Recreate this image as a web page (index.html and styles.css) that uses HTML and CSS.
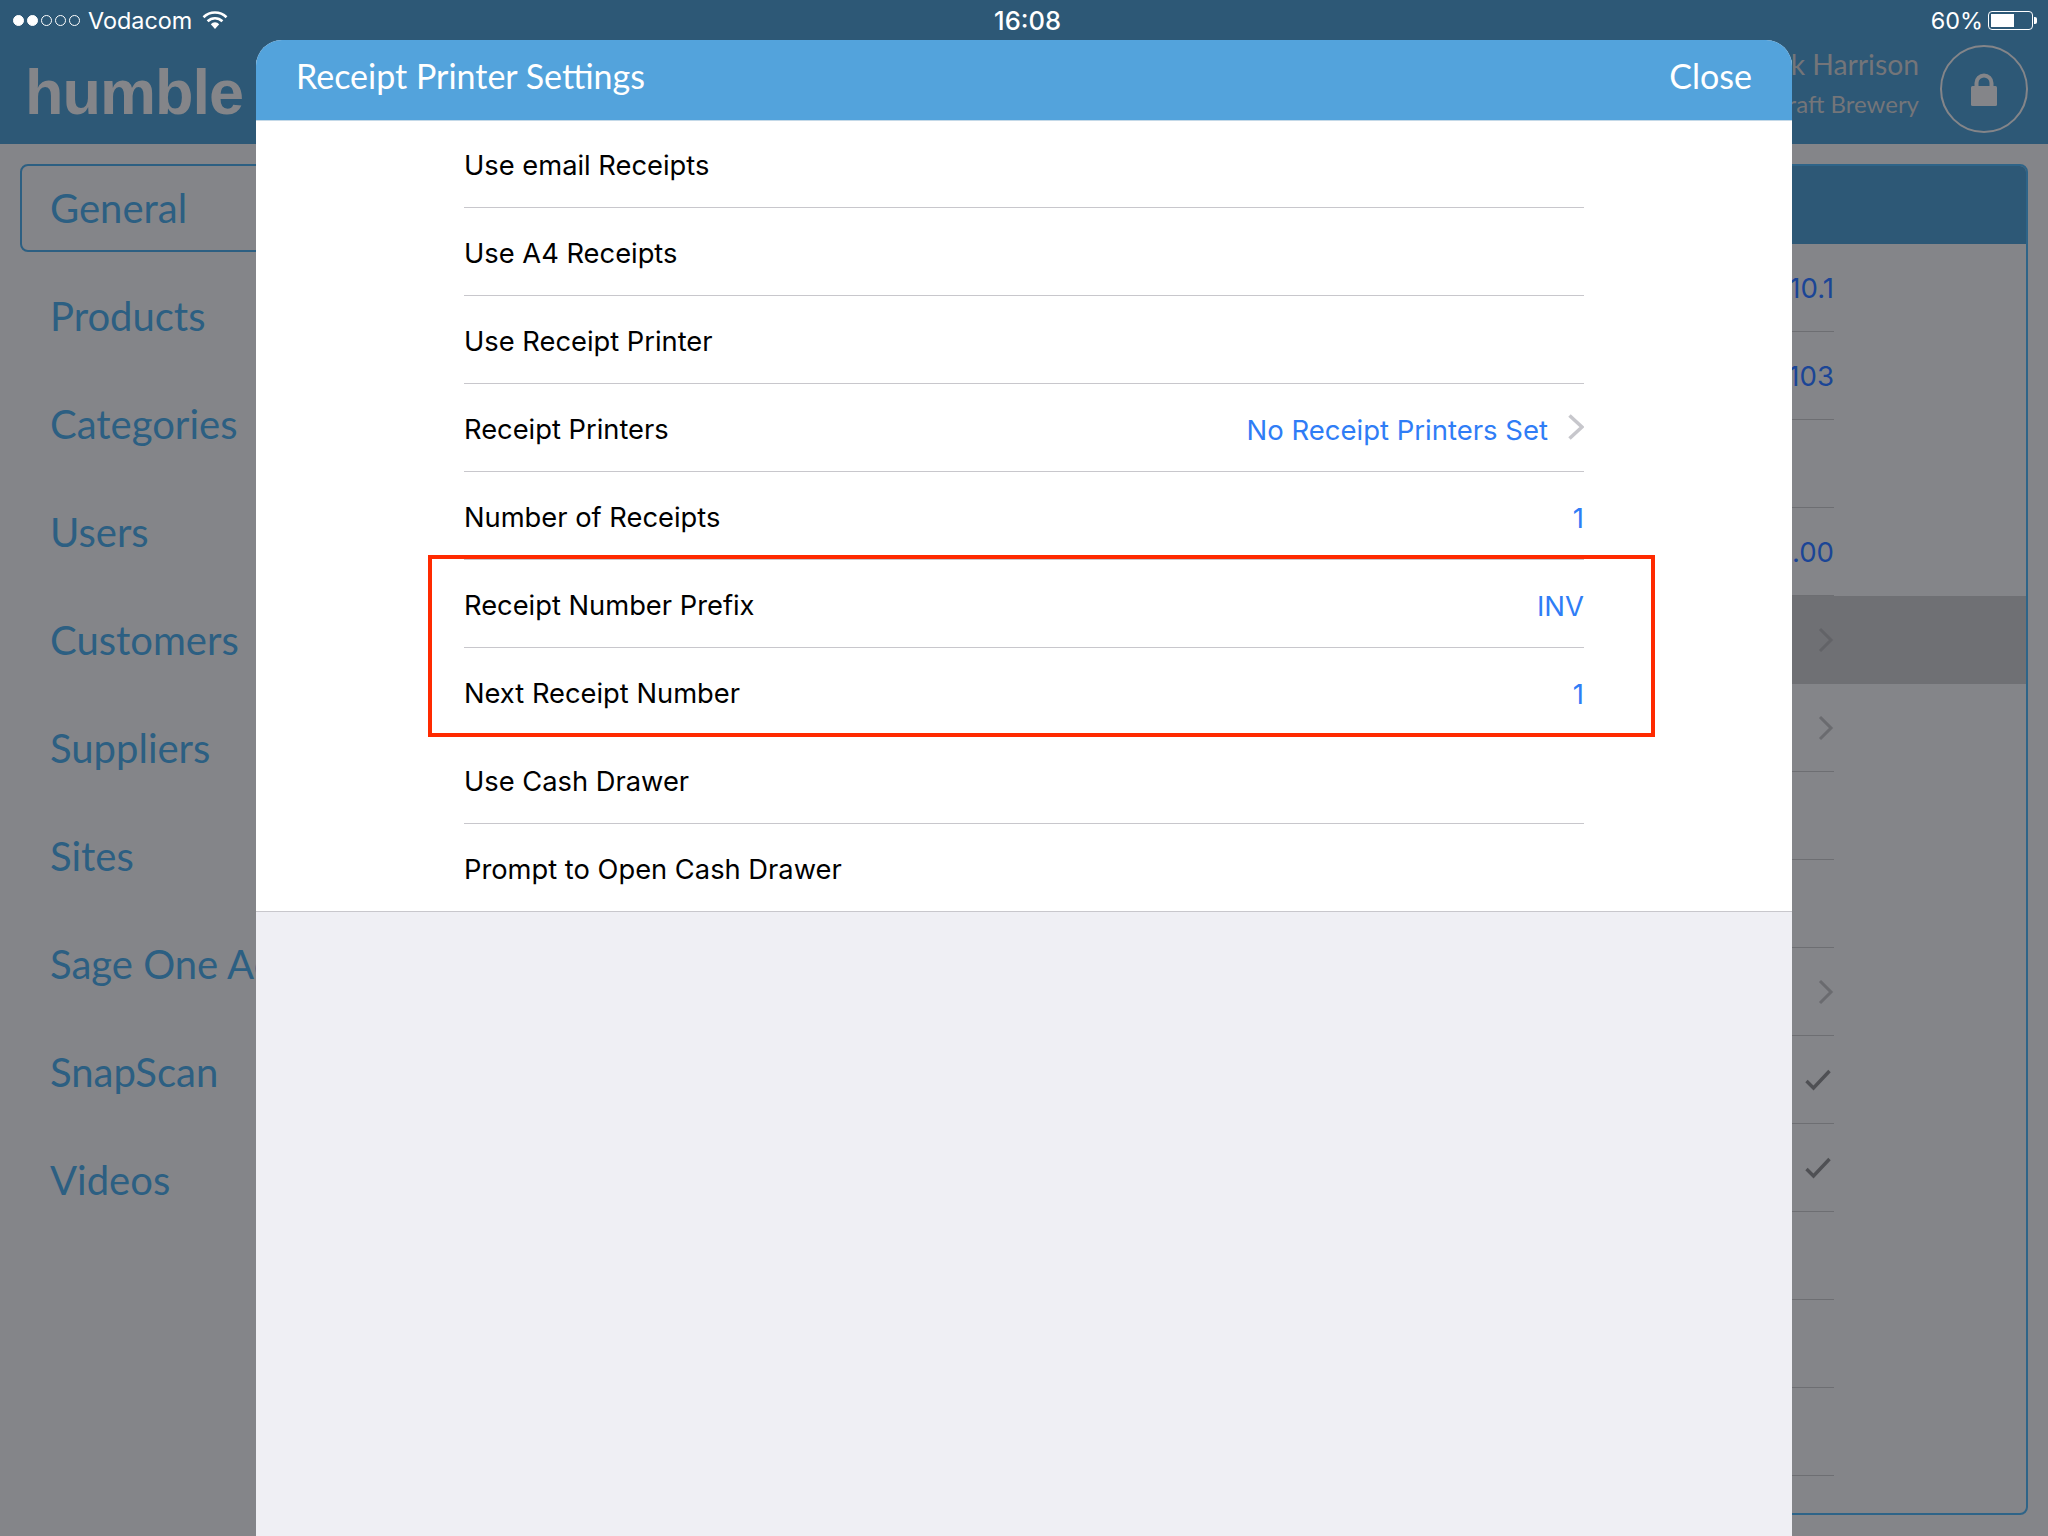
FILE: index.html
```html
<!DOCTYPE html>
<html lang="en">
<head>
<meta charset="UTF-8">
<title>Receipt Printer Settings</title>
<link rel="stylesheet" href="styles.css">
</head>
<body>
	<div class="app">
		<div class="top">
			<div class="status">
				<div class="status-left">
					<div class="dots"><i class="on"></i><i class="on"></i><i></i><i></i><i></i></div>
					<span class="carrier">Vodacom</span>
					<svg class="wifi" width="26" height="20" viewBox="0 0 26 20">
						<path d="M1.5 7.2a16.5 16.5 0 0 1 23 0" fill="none" stroke="#fff" stroke-width="2.6"/>
						<path d="M5.6 11.2a10.6 10.6 0 0 1 14.8 0" fill="none" stroke="#fff" stroke-width="2.6"/>
						<path d="M8.8 14.2a5.6 5.6 0 0 1 8.4 0L13 19z" fill="#fff"/>
					</svg>
				</div>
				<div class="clock">16:08</div>
				<div class="status-right">
					<span class="percent">60%</span>
					<div class="battery"><div class="battery-fill"></div></div>
					<div class="battery-nub"></div>
				</div>
			</div>
			<div class="header">
				<div class="logo">humble</div>
				<div class="user">
					<div class="user-info">
						<div class="user-name">Mark Harrison</div>
						<div class="user-site">Craft Brewery</div>
					</div>
					<div class="lock">
						<svg width="26" height="33" viewBox="0 0 26 33">
							<path d="M5.5 14V10a7.5 7.5 0 0 1 15 0v4" fill="none" stroke="#848589" stroke-width="4"/>
							<rect x="0" y="13" width="26" height="20" rx="1.5" fill="#848589"/>
						</svg>
					</div>
				</div>
			</div>
		</div>
		<div class="main">
			<ul class="side">
				<li class="ac">General</li>
				<li>Products</li>
				<li>Categories</li>
				<li>Users</li>
				<li>Customers</li>
				<li>Suppliers</li>
				<li>Sites</li>
				<li>Sage One Accounting</li>
				<li>SnapScan</li>
				<li>Videos</li>
			</ul>
			<div class="panel">
				<div class="panel-head"></div>
				<div class="panel-row">10.1</div>
				<div class="panel-row">103</div>
				<div class="panel-row"></div>
				<div class="panel-row">0.00</div>
				<div class="panel-row sel">
					<svg class="more" width="16" height="26" viewBox="0 0 16 26"><path d="M2 2l11 11L2 24" fill="none" stroke="#626367" stroke-width="3"/></svg>
				</div>
				<div class="panel-row">
					<svg class="more" width="16" height="26" viewBox="0 0 16 26"><path d="M2 2l11 11L2 24" fill="none" stroke="#6a6b6f" stroke-width="3"/></svg>
				</div>
				<div class="panel-row"></div>
				<div class="panel-row"></div>
				<div class="panel-row">
					<svg class="more" width="16" height="26" viewBox="0 0 16 26"><path d="M2 2l11 11L2 24" fill="none" stroke="#6a6b6f" stroke-width="3"/></svg>
				</div>
				<div class="panel-row">
					<svg class="tick" width="26" height="22" viewBox="0 0 26 22"><path d="M1.5 12l7 7L24.5 2" fill="none" stroke="#4f5054" stroke-width="3.4"/></svg>
				</div>
				<div class="panel-row">
					<svg class="tick" width="26" height="22" viewBox="0 0 26 22"><path d="M1.5 12l7 7L24.5 2" fill="none" stroke="#4f5054" stroke-width="3.4"/></svg>
				</div>
				<div class="panel-row"></div>
				<div class="panel-row"></div>
				<div class="panel-row"></div>
			</div>
		</div>
	</div>

	<div class="modal">
		<div class="modal-head">
			<div class="modal-title">Receipt Printer Settings</div>
			<div class="modal-close">Close</div>
		</div>
		<div class="list">
			<div class="row"><span>Use email Receipts</span></div>
			<div class="row"><span>Use A4 Receipts</span></div>
			<div class="row"><span>Use Receipt Printer</span></div>
			<div class="row">
				<span>Receipt Printers</span>
				<div class="row-right">
					<span class="val">No Receipt Printers Set</span>
					<svg class="row-more" width="16" height="26" viewBox="0 0 16 26"><path d="M1.5 1.5L14 13 1.5 24.5" fill="none" stroke="#c7c7cc" stroke-width="3.6"/></svg>
				</div>
			</div>
			<div class="row"><span>Number of Receipts</span><span class="val">1</span></div>
			<div class="row"><span>Receipt Number Prefix</span><span class="val">INV</span></div>
			<div class="row"><span>Next Receipt Number</span><span class="val">1</span></div>
			<div class="row"><span>Use Cash Drawer</span></div>
			<div class="row"><span>Prompt to Open Cash Drawer</span></div>
		</div>
	</div>

	<div class="mark"></div>
</body>
</html>
```

FILE: styles.css
```css
* {
	box-sizing: border-box;
}
html, body {
	margin: 0;
	padding: 0;
}
body {
	position: relative;
	width: 2048px;
	height: 1536px;
	overflow: hidden;
	background: #848589;
	font-family: "Lato", "Liberation Sans", sans-serif;
}
.top {
	height: 144px;
	background: #2d5876;
}
.status {
	display: flex;
	justify-content: space-between;
	align-items: center;
	height: 40px;
	padding: 0 11px 0 13px;
	color: #fff;
	font-family: "Inter", "Liberation Sans", sans-serif;
	font-size: 23.4px;
}
.status-left, .status-right {
	display: flex;
	align-items: center;
	width: 300px;
}
.status-right {
	justify-content: flex-end;
}
.dots {
	display: flex;
	gap: 3px;
	margin-right: 8px;
}
.dots i {
	display: block;
	width: 11px;
	height: 11px;
	border: 1px solid #fff;
	border-radius: 50%;
}
.dots i.on {
	background: #fff;
}
.wifi {
	margin-left: 10px;
}
.clock {
	font-size: 25.5px;
	font-weight: 500;
	padding-top: 1px;
	padding-left: 5px;
}
.percent {
	margin-right: 5px;
}
.battery {
	width: 45px;
	height: 19px;
	padding: 2px;
	border: 1px solid #fff;
	border-radius: 4px;
}
.battery-fill {
	width: 23px;
	height: 100%;
	background: #fff;
}
.battery-nub {
	width: 3px;
	height: 7px;
	margin-left: 1px;
	background: #fff;
	border-radius: 0 2px 2px 0;
}
.header {
	display: flex;
	justify-content: space-between;
	align-items: center;
	height: 104px;
	padding: 0 20px 6px 25px;
}
.logo {
	margin-top: 5px;
	color: #848589;
	font-family: "Liberation Sans", sans-serif;
	font-weight: bold;
	font-size: 63px;
	letter-spacing: -1px;
}
.user {
	display: flex;
	align-items: center;
	gap: 21px;
}
.user-info {
	margin-bottom: 10px;
	color: #747579;
	text-align: right;
}
.user-name {
	font-size: 28.3px;
	line-height: 40px;
}
.user-site {
	font-size: 24px;
	line-height: 40px;
}
.lock {
	display: flex;
	justify-content: center;
	align-items: center;
	width: 88px;
	height: 88px;
	border: 2px solid #848589;
	border-radius: 50%;
}
.main {
	display: flex;
	gap: 20px;
	padding: 20px 20px 0;
}
.side {
	flex: none;
	width: 300px;
	margin: 0;
	padding: 0;
	list-style: none;
}
.side li {
	height: 88px;
	margin-bottom: 20px;
	padding-left: 30px;
	line-height: 88px;
	color: #2c5f82;
	font-size: 40px;
	white-space: nowrap;
}
.side li.ac {
	border: 2px solid #2c5f82;
	border-radius: 8px;
	padding-left: 28px;
	line-height: 84px;
}
.panel {
	flex: 1;
	height: 1351px;
	border: 2px solid #2e6488;
	border-radius: 8px;
	overflow: hidden;
}
.panel-head {
	height: 78px;
	background: #2d5876;
}
.panel-row {
	display: flex;
	justify-content: flex-end;
	align-items: center;
	height: 88px;
	margin-right: 192px;
	border-bottom: 1px solid #6d6e72;
	color: #1b4596;
	font-family: "Inter", "Liberation Sans", sans-serif;
	font-size: 27.6px;
}
.panel-row.sel {
	margin-right: 0;
	padding-right: 192px;
	background: #6f7074;
	border-bottom: 0;
}
.tick {
	margin-right: 3px;
}
.modal {
	position: absolute;
	top: 40px;
	left: 256px;
	width: 1536px;
	height: 1496px;
	background: #efeff4;
	border-radius: 26px 26px 0 0;
	overflow: hidden;
}
.modal-head {
	position: relative;
	display: flex;
	justify-content: space-between;
	align-items: center;
	height: 80px;
	padding: 0 40px 10px;
	color: #fff;
	background: #53a3dc;
	box-shadow: 0 1px 0 #c4d9e8;
}
.modal-title {
	font-size: 34px;
}
.modal-close {
	font-size: 34px;
}
.list {
	padding: 0 208px;
	background: #fff;
	border-bottom: 1px solid #c8c7cc;
}
.row {
	display: flex;
	justify-content: space-between;
	align-items: center;
	height: 88px;
	padding-top: 4px;
	color: #000;
	font-family: "Inter", "Liberation Sans", sans-serif;
	font-size: 27.3px;
	border-bottom: 1px solid #c8c7cc;
}
.row:last-child {
	height: 87px;
	border-bottom: 0;
}
.row-right {
	display: flex;
	align-items: center;
	gap: 20px;
}
.row-more {
	margin-bottom: 5px;
}
.val {
	color: #2f7df6;
	font-size: 27.5px;
}
.mark {
	position: absolute;
	top: 555px;
	left: 428px;
	width: 1227px;
	height: 182px;
	border: 4px solid #ff2a00;
}
```
